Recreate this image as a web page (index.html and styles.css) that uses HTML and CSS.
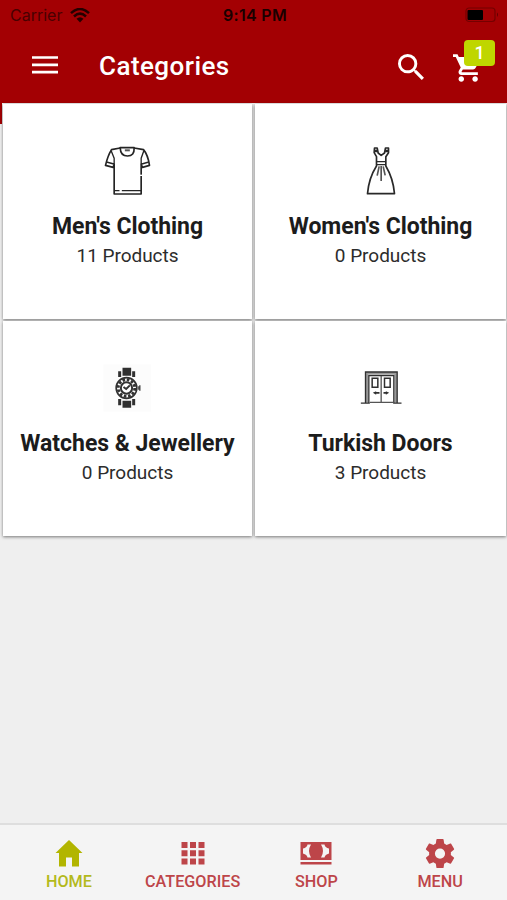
FILE: index.html
```html
<!DOCTYPE html>
<html lang="en">
<head>
<meta charset="utf-8">
<title>Categories</title>
<link rel="stylesheet" href="styles.css">
</head>
<body>
<div class="app">
  <header class="header">
    <div class="status">
      <div class="carrier">Carrier
        <svg class="wifi" viewBox="0 0 20 15"><path d="M1 5.2Q10-3.2 19 5.2M4 8.5Q10 2.8 16 8.5" fill="none" stroke="#250000" stroke-width="2.5"/><path d="M6.5 10.8Q10 7.8 13.5 10.8L10 14.5Z" fill="#250000"/></svg>
      </div>
      <div class="time">9:14 PM</div>
      <svg class="battery" viewBox="0 0 35 16"><rect x="1" y="1" width="29" height="13.5" rx="3" fill="none" stroke="#750000" stroke-width="1.2"/><rect x="2.5" y="3" width="15.5" height="10" rx="1" fill="#000"/><path d="M32 5.500q2 2 0 4.500z" fill="#600000"/></svg>
    </div>
    <div class="toolbar">
      <svg class="burger" viewBox="0 0 26 18"><path d="M0 1.500h26M0 8.800h26M0 16.200h26" stroke="#fff" stroke-width="2.700"/></svg>
      <h1 class="title">Categories</h1>
      <svg class="search" viewBox="3 3 17.500 17.500"><path fill="#fff" d="M15.500 14h-.79l-.28-.27A6.470 6.470 0 0 0 16 9.500 6.500 6.500 0 1 0 9.500 16c1.610 0 3.090-.59 4.230-1.570l.27.28v.79l5 4.990L20.490 19l-4.990-5zm-6 0C7.010 14 5 11.990 5 9.500S7.010 5 9.500 5 14 7.010 14 9.500 11.990 14 9.500 14z"/></svg>
      <div class="cart">
        <svg class="cart-icon" viewBox="1 2 21 20"><path fill="#fff" d="M7 18c-1.100 0-1.990.9-1.990 2S5.900 22 7 22s2-.9 2-2-.9-2-2-2zM1 2v2h2l3.600 7.590-1.350 2.450c-.16.28-.25.61-.25.96 0 1.100.9 2 2 2h12v-2H7.420c-.14 0-.25-.11-.25-.25l.03-.12.9-1.630h7.450c.75 0 1.410-.41 1.750-1.030l3.580-6.490A1 1 0 0 0 20 4H5.210l-.94-2H1zm16 16c-1.100 0-1.990.9-1.990 2s.89 2 1.990 2 2-.9 2-2-.9-2-2-2z"/></svg>
        <span class="badge">1</span>
      </div>
    </div>
  </header>

  <main class="content">
    <div class="grid">
      <section class="card">
        <svg class="pic" viewBox="-4.500 0 240 210"><g fill="none" stroke="#242424" stroke-width="5" stroke-linejoin="round"><path d="M92 39L66 44Q55 62 48 91L71 97L74 88V177H155V88L159 97L180 91Q175 59 162 44L134 39"/><path d="M92 38H134Q135 63 114 63Q93 63 92 38Z"/><path d="M65 47L74 70V88M163 47L155 70V88M51 81L73 87M178 81L157 87M74 167H90M97 167H155" stroke-width="4"/></g><path d="M106 43h15v6h-15z" fill="#555"/><path d="M151 119h8v4h-8z" fill="#fff"/></svg>
        <h2 class="name">Men's Clothing</h2>
        <p class="count">11 Products</p>
      </section>
      <section class="card">
        <svg class="pic" viewBox="-13.500 0 240 210"><g fill="none" stroke="#292929" stroke-width="5" stroke-linejoin="round"><path d="M87 39H95L98 54L107 61L117 54L120 39H129V53L121 65V93Q143 130 147 176H66Q70 129 93 93V65L86 53Z"/><path d="M93 80H121M93 89H121" stroke-width="4"/><path d="M86 48H96M119 48H129" stroke-width="7"/><path d="M101 94L95 122M107 93V138M113 94L119 121" stroke="#555"/></g></svg>
        <h2 class="name">Women's Clothing</h2>
        <p class="count">0 Products</p>
      </section>
      <section class="card">
        <svg class="pic" viewBox="-4.500 -9 240 210"><path fill="#fcfcfc" d="M42 28h142v142H42z"/><path d="M99 38h26v24H99zM99 137h26v21H99zM86 49h9v17h-9zM128 49h9v17h-9zM86 132h9v19h-9zM128 132h9v19h-9z" fill="#303030"/><circle cx="111" cy="99" r="31" fill="#fff" stroke="#333" stroke-width="5"/><circle cx="111" cy="99" r="25" fill="none" stroke="#333" stroke-width="9" stroke-dasharray="8 5.090"/><circle cx="111" cy="99" r="17" fill="#fff" stroke="#333" stroke-width="6"/><path d="M102 96L110 102L121 91" fill="none" stroke="#333" stroke-width="6"/><path d="M146 94H149V91H153V107H149V104H146Z" fill="#444"/></svg>
        <h2 class="name">Watches &amp; Jewellery</h2>
        <p class="count">0 Products</p>
      </section>
      <section class="card">
        <svg class="pic" viewBox="-13.500 -9 240 210"><g fill="none" stroke="#303030"><path d="M64 143V55H151V143" stroke="#999" stroke-width="8"/><path d="M60 144V51H155V144M70 144V62H145V144M46 144.500H73M143 144.500H168" stroke-width="4"/><path d="M73 142H143M107 63V142" stroke-width="4" stroke="#555"/><path d="M80 70H97V97H80ZM117 70H134V97H117Z" stroke-width="4.500"/></g><path d="M82 113l10-4v2h10v5H92v3zM131 113l-10-4v2h-7v5h7v3z" fill="#303030"/></svg>
        <h2 class="name">Turkish Doors</h2>
        <p class="count">3 Products</p>
      </section>
    </div>
  </main>

  <nav class="tabs">
    <a class="tab active"><svg class="tab-icon" viewBox="0 0 32 32"><path d="M16 2L29.500 15H26V28.500H19V19.500H13V28.500H6V15H2.500Z"/></svg><span>HOME</span></a>
    <a class="tab"><svg class="tab-icon" viewBox="0 0 32 32"><path d="M4.500 4h6v6h-6zM13 4h6v6h-6zM21.500 4h6v6h-6zM4.500 12.300h6v6h-6zM13 12.300h6v6h-6zM21.500 12.300h6v6h-6zM4.500 20.500h6v6h-6zM13 20.500h6v6h-6zM21.500 20.500h6v6h-6z"/></svg><span>CATEGORIES</span></a>
    <a class="tab"><svg class="tab-icon" viewBox="0 0 32 32"><path d="M.5 4h31v18H.5zM.5 24h31v2.500H.5z"/><path fill="#f4f4f4" d="M11 6.500Q7 13 11 19.500H7.500Q7 16.500 3 15.500V10.500Q7 9.500 7.500 6.500ZM21 6.500Q25 13 21 19.500H24.500Q25 16.500 29 15.500V10.500Q25 9.500 24.500 6.500Z"/></svg><span>SHOP</span></a>
    <a class="tab"><svg class="tab-icon" viewBox="1 1.300 22 22"><path d="M19.430 12.980c.04-.32.07-.64.07-.98s-.03-.66-.07-.98l2.110-1.650c.19-.15.24-.42.12-.64l-2-3.460c-.12-.22-.39-.3-.61-.22l-2.490 1c-.52-.4-1.080-.73-1.690-.98l-.38-2.650A.49.49 0 0 0 14 2h-4c-.25 0-.46.18-.49.42l-.38 2.650c-.61.25-1.170.59-1.690.98l-2.490-1c-.23-.09-.49 0-.61.22l-2 3.460c-.13.22-.07.49.12.64l2.110 1.650c-.04.32-.07.65-.07.98s.03.66.07.98l-2.110 1.650c-.19.15-.24.42-.12.64l2 3.460c.12.22.39.3.61.22l2.490-1c.52.4 1.080.73 1.690.98l.38 2.650c.03.24.24.42.49.42h4c.25 0 .46-.18.49-.42l.38-2.650c.61-.25 1.170-.59 1.690-.98l2.490 1c.23.09.49 0 .61-.22l2-3.460c.12-.22.07-.49-.12-.64l-2.110-1.650zM12 15.500A3.500 3.500 0 1 1 12 8.500a3.500 3.500 0 0 1 0 7z"/></svg><span>MENU</span></a>
  </nav>
</div>
</body>
</html>
```
FILE: styles.css
```css
* { box-sizing: border-box; }
body { margin: 0; font-family: Roboto, "Liberation Sans", sans-serif; background: #efefef; }
.app { height: 900px; display: flex; flex-direction: column; background: #efefef; overflow: hidden; }

.header { height: 103px; flex: none; background: #a30003; }
.status { height: 30px; padding: 0 7px 0 10px; display: grid; grid-template-columns: 1fr auto 1fr; align-items: center; }
.carrier { display: flex; align-items: center; gap: 8px; font: 400 16px/30px Inter, sans-serif; letter-spacing: 0; color: #490001; }
.wifi { width: 20px; height: 15px; }
.time { font: 600 16px/30px Inter, sans-serif; letter-spacing: 0.3px; color: #190000; }
.battery { width: 35px; height: 16px; justify-self: end; }
.toolbar { height: 73px; display: flex; align-items: center; padding: 0 12px 0 32px; }
.burger { width: 26px; height: 18px; margin-top: -3px; }
.title { flex: 1; margin: -2px 0 0 41px; font-size: 26px; line-height: 34px; font-weight: 500; letter-spacing: 0.45px; color: #fff; }
.search { width: 26px; height: 26px; margin-right: 29px; }
.cart { position: relative; width: 42px; height: 28px; margin-top: 3px; }
.cart-icon { display: block; width: 29px; height: 28px; }
.badge { position: absolute; left: 11px; top: -14px; width: 31px; height: 26px; border-radius: 4px; background: #bfd600; color: #fff; font-size: 18px; line-height: 26px; font-weight: 500; text-align: center; }

.content { flex: 1; padding: 1px 1px 0 3px; background: linear-gradient(#a30003, #a30003) 0 0 / 2px 21px no-repeat; }
.grid { display: grid; grid-template-columns: 249px 251px; gap: 2px 3px; }
.card { height: 215px; padding-top: 31px; background: #fff; text-align: center; box-shadow: 0 1px 3px rgba(0, 0, 0, 0.5); }
.pic { display: block; width: 80px; height: 70px; margin: 0 auto; }
.name { margin: 7px 0 0; font-size: 23px; line-height: 30px; font-weight: 700; letter-spacing: -0.03px; color: #1c1c1c; white-space: nowrap; }
.count { margin: 1px 0 0; font-size: 19px; line-height: 26px; letter-spacing: -0.03px; color: #2c2c2c; }

.tabs { height: 77px; flex: none; display: grid; grid-template-columns: repeat(4, 1fr); padding: 0 5px 0 7px; border-top: 2px solid #dedede; background: #f4f4f4; }
.tab { display: flex; flex-direction: column; align-items: center; padding-top: 13px; color: #bd4549; fill: #bd4549; font-size: 16.200px; line-height: 24px; font-weight: 500; }
.tab.active { color: #b3b91c; fill: #b2b500; }
.tab-icon { width: 32px; height: 32px; }
```
